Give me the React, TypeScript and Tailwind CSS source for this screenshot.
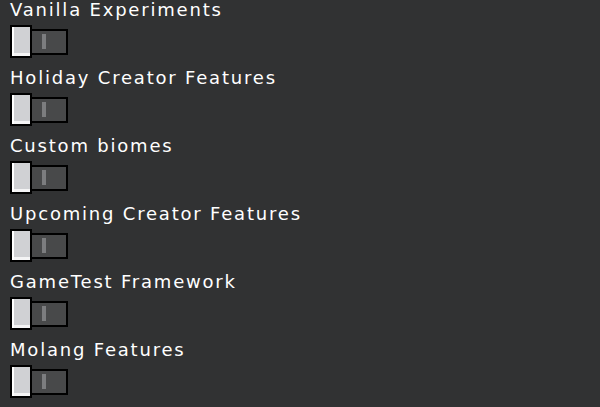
const experiments = [
  "Vanilla Experiments",
  "Holiday Creator Features",
  "Custom biomes",
  "Upcoming Creator Features",
  "GameTest Framework",
  "Molang Features",
];

function Toggle() {
  return (
    <div className="flex items-center">
      <div className="z-10 flex h-[33px] w-[22px] border-2 border-black bg-[#d0d1d4]">
        <div className="flex h-full w-full flex-col border-l-2 border-white">
          <div className="flex-1 bg-[#d0d1d4]" />
          <div className="h-[3px] bg-[#f4f4f5]" />
        </div>
      </div>
      <div className="-ml-[2px] flex h-[26px] w-[38px] items-center border-2 border-black bg-[#48494a] pl-[10px]">
        <div className="h-[15px] w-[4px] bg-[#7c7d7f]" />
      </div>
    </div>
  );
}

export default function App() {
  return (
    <div className="h-[407px] w-[600px] overflow-hidden bg-[#313233] pl-[10px] font-['DejaVu_Sans',sans-serif] text-white">
      {experiments.map((label) => (
        <div key={label} className="flex h-[68px] flex-col">
          <div className="h-[25px] text-[18px] leading-[20px] tracking-[1.8px]">{label}</div>
          <Toggle />
        </div>
      ))}
    </div>
  );
}
